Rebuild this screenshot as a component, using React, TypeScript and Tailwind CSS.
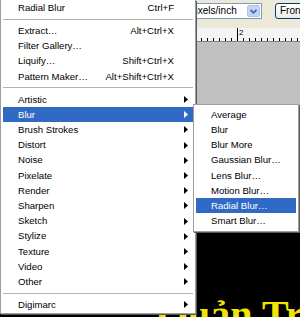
import React from "react";

type Item = { label: string; shortcut?: string; sub?: boolean; active?: boolean } | "sep";

const mainItems: Item[] = [
  { label: "Radial Blur", shortcut: "Ctrl+F" },
  "sep",
  { label: "Extract…", shortcut: "Alt+Ctrl+X" },
  { label: "Filter Gallery…" },
  { label: "Liquify…", shortcut: "Shift+Ctrl+X" },
  { label: "Pattern Maker…", shortcut: "Alt+Shift+Ctrl+X" },
  "sep",
  { label: "Artistic", sub: true },
  { label: "Blur", sub: true, active: true },
  { label: "Brush Strokes", sub: true },
  { label: "Distort", sub: true },
  { label: "Noise", sub: true },
  { label: "Pixelate", sub: true },
  { label: "Render", sub: true },
  { label: "Sharpen", sub: true },
  { label: "Sketch", sub: true },
  { label: "Stylize", sub: true },
  { label: "Texture", sub: true },
  { label: "Video", sub: true },
  { label: "Other", sub: true },
  "sep",
  { label: "Digimarc", sub: true },
];

const subItems = [
  "Average",
  "Blur",
  "Blur More",
  "Gaussian Blur…",
  "Lens Blur…",
  "Motion Blur…",
  "Radial Blur…",
  "Smart Blur…",
];

function Arrow({ white }: { white?: boolean }) {
  return (
    <svg width="4" height="7" viewBox="0 0 4 7" className="shrink-0">
      <path d="M0 0 L4 3.5 L0 7 Z" fill={white ? "#ffffff" : "#000000"} />
    </svg>
  );
}

export default function App() {
  const font = { fontFamily: '"Liberation Sans", Arial, sans-serif' };
  const ticks = Array.from({ length: 20 }, (_, i) => i);
  return (
    <div className="relative w-[300px] h-[317px] overflow-hidden bg-black" style={font}>
      {/* Background application */}
      <div className="flex flex-col w-full h-full">
        <div className="h-[28px] bg-[#ece9d8] flex items-start pt-[3px] pl-[170px] gap-[13px] shrink-0">
          <div className="w-[92px] h-[16px] shrink-0 bg-white border border-[#7f9db9] flex items-center justify-between pr-[1px]">
            <span className="text-[10px] text-black pl-[19px] leading-none whitespace-nowrap">pixels/inch</span>
            <div className="w-[13px] h-[12px] rounded-[2px] bg-[#c1d3fb] border border-[#b0c4ef] flex items-center justify-center">
              <svg width="7" height="5" viewBox="0 0 7 5">
                <path d="M0.5 0.8 L3.5 3.8 L6.5 0.8" stroke="#4d6185" strokeWidth="1.6" fill="none" />
              </svg>
            </div>
          </div>
          <div className="h-[16px] w-[70px] shrink-0 rounded-[3px] border border-[#003c74] bg-gradient-to-b from-white to-[#ecebe6] flex items-center pl-[4px]">
            <span className="text-[10px] text-black leading-none whitespace-nowrap">Front Image</span>
          </div>
        </div>
        <div className="h-[14px] bg-[#f4f4f4] border-b border-[#808080] relative shrink-0 flex items-end">
          <div className="flex items-end h-full pl-[195px]">
            {ticks.map((i) => (
              <div key={i} className="w-[6px] h-full flex items-end shrink-0">
                <div className={i === 7 ? "w-px h-[13px] bg-black" : "w-px h-[3px] bg-black"} />
              </div>
            ))}
          </div>
          <span className="absolute left-[239px] top-[1px] text-[8px] leading-none text-black">2</span>
        </div>
        <div className="h-[188px] bg-[#c0c0c0] shrink-0" />
        <div className="flex-1 bg-black relative">
          <span
            className="absolute left-[157px] top-[65px] text-[40px] font-bold leading-none text-[#f2e600] whitespace-nowrap"
            style={{ fontFamily: '"Liberation Serif", "Times New Roman", serif' }}
          >
            Quản Trị
          </span>
        </div>
      </div>

      {/* Main Filter menu */}
      <div className="absolute left-0 top-0 w-[196px] h-[314px] bg-white border-l border-r border-b border-[#9d9d9d] shadow-[1px_1px_0_#5a5a5a] text-[9.6px] text-black">
        {mainItems.map((it, i) =>
          it === "sep" ? (
            <div key={i} className="h-[8px] flex items-center px-[2px]">
              <div className="w-full h-px bg-[#b8b4a8]" />
            </div>
          ) : (
            <div
              key={i}
              className={
                "h-[15.2px] mx-[2px] flex items-center pl-[15px] pr-[5px] " +
                (it.active ? "bg-[#316ac5] text-white" : "")
              }
            >
              <span className="flex-1 whitespace-nowrap leading-none">{it.label}</span>
              {it.shortcut && (
                <span className="whitespace-nowrap leading-none mr-[14px]">{it.shortcut}</span>
              )}
              {it.sub && <Arrow white={it.active} />}
            </div>
          )
        )}
      </div>

      {/* Blur submenu */}
      <div className="absolute left-[193px] top-[104px] w-[106px] bg-white border border-[#9d9d9d] shadow-[1px_1px_0_#5a5a5a] p-[2px] text-[9.6px] text-black">
        {subItems.map((s) => (
          <div
            key={s}
            className={
              "h-[15.2px] flex items-center pl-[15px] " +
              (s === "Radial Blur…" ? "bg-[#316ac5] text-white" : "")
            }
          >
            <span className="whitespace-nowrap leading-none">{s}</span>
          </div>
        ))}
      </div>
    </div>
  );
}
